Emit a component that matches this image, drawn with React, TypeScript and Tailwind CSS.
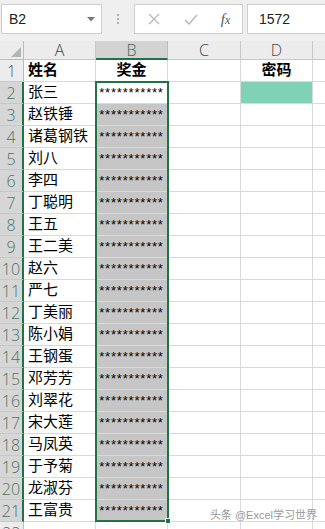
import React from "react";

const names = [
  "张三","赵铁锤","诸葛钢铁","刘八","李四","丁聪明","王五","王二美","赵六","严七",
  "丁美丽","陈小娟","王钢蛋","邓芳芳","刘翠花","宋大莲","马凤英","于予菊","龙淑芬","王富贵",
];

const font = { fontFamily: '"Liberation Sans", "Noto Sans CJK SC", sans-serif' };

function Row({ n, a, b, bold, d, dFill }: { n: number; a?: string; b?: string; bold?: boolean; d?: string; dFill?: boolean }) {
  const sel = n >= 2 && n <= 21;
  return (
    <>
      <div
        className={`h-[22px] flex items-center justify-center text-[16px] border-b border-[#c8c8c8] ${
          sel ? "bg-[#d6d6d6] text-[#4a7560] border-r-2 border-r-[#217346]" : "bg-[#ececec] text-[#555] border-r border-r-[#bdbdbd]"
        }`}
        style={{ fontFamily: '"Open Sans", "Liberation Sans", sans-serif', fontWeight: 300 }}
      >
        {n}
      </div>
      <div className={`h-[22px] flex items-center pl-[4px] text-[15px] text-black border-b border-r border-[#d9d9d9] ${bold ? "font-bold" : ""}`}>
        {a}
      </div>
      <div
        className={`h-[22px] flex items-center justify-center text-black border-b border-r ${
          n >= 3 && n <= 21 ? "bg-[#c6c6c6] border-[#dadada]" : "border-[#d9d9d9]"
        } ${bold ? "font-bold text-[15px]" : "text-[13px] tracking-[0.8px]"}`}
      >
        {b}
      </div>
      <div className="h-[22px] border-b border-r border-[#d9d9d9]" />
      <div
        className={`h-[22px] flex items-center justify-center font-bold text-[15px] text-black border-b border-r border-[#d9d9d9] ${
          dFill ? "bg-[#7fd2b5]" : ""
        }`}
      >
        {d}
      </div>
      <div className="h-[22px] border-b border-[#d9d9d9]" />
    </>
  );
}

const hdr = { fontFamily: '"Open Sans", "Liberation Sans", sans-serif', fontWeight: 300 };

export default function App() {
  return (
    <div className="w-[325px] h-[529px] overflow-hidden bg-white relative" style={font}>
      {/* formula bar */}
      <div className="h-[41px] bg-[#efefef] flex items-start pt-[4px] pl-[1px] gap-0">
        <div className="w-[101px] h-[30px] bg-white border border-[#cfcfcf] flex items-center pl-[7px] pr-[6px] text-[14px] text-[#222]">
          <span className="flex-1">B2</span>
          <svg width="8" height="5" viewBox="0 0 8 5"><path d="M0 0 L8 0 L4 4.5 Z" fill="#7a7a7a" /></svg>
        </div>
        <div className="w-[32px] h-[30px] flex flex-col items-center justify-center gap-[2px]">
          <span className="w-[2px] h-[2px] bg-[#b0b0b0]" />
          <span className="w-[2px] h-[2px] bg-[#b0b0b0]" />
          <span className="w-[2px] h-[2px] bg-[#b0b0b0]" />
        </div>
        <div className="w-[109px] h-[30px] bg-white border border-[#cfcfcf] flex items-center">
          <div className="w-[37px] flex justify-center">
            <svg width="12" height="12" viewBox="0 0 12 12"><path d="M1 1 L11 11 M11 1 L1 11" stroke="#b8b8b8" strokeWidth="1.3" /></svg>
          </div>
          <div className="w-[37px] flex justify-center">
            <svg width="14" height="11" viewBox="0 0 14 11"><path d="M1 6 L5 10 L13 1" stroke="#b8b8b8" strokeWidth="1.5" fill="none" /></svg>
          </div>
          <div className="w-[33px] flex justify-center items-baseline text-[15px] italic text-[#555]" style={{ fontFamily: '"Liberation Serif", serif' }}>
            f<span className="text-[12px]">x</span>
          </div>
        </div>
        <div className="ml-[4px] flex-1 h-[30px] bg-white border border-[#cfcfcf] border-r-0 flex items-center pl-[11px] text-[14px] text-[#222]">
          1572
        </div>
      </div>

      {/* sheet */}
      <div className="grid grid-cols-[24px_72px_72px_73px_72px_1fr]">
        {/* header */}
        <div className="h-[19px] bg-[#ececec] border-b border-r border-[#bdbdbd] relative">
          <svg className="absolute right-[2px] bottom-[2px]" width="10" height="10" viewBox="0 0 10 10"><path d="M10 0 L10 10 L0 10 Z" fill="#b4b4b4" /></svg>
        </div>
        <div className="h-[19px] bg-[#ececec] border-b border-r border-[#c8c8c8] flex items-center justify-center text-[16px] text-[#444]" style={hdr}>A</div>
        <div className="h-[19px] bg-[#d3d3d3] border-b-2 border-b-[#217346] border-r border-r-[#bdbdbd] flex items-center justify-center text-[16px] text-[#3c6e52]" style={hdr}>B</div>
        <div className="h-[19px] bg-[#ececec] border-b border-r border-[#c8c8c8] flex items-center justify-center text-[16px] text-[#444]" style={hdr}>C</div>
        <div className="h-[19px] bg-[#ececec] border-b border-r border-[#c8c8c8] flex items-center justify-center text-[16px] text-[#444]" style={hdr}>D</div>
        <div className="h-[19px] bg-[#ececec] border-b border-[#c8c8c8]" />

        <Row n={1} a="姓名" b="奖金" bold d="密码" />
        {names.map((nm, i) => (
          <Row key={i} n={i + 2} a={nm} b="***********" dFill={i === 0} />
        ))}
        <Row n={22} />
      </div>

      {/* selection border over B2:B21 */}
      <div className="absolute left-[95px] top-[81px] w-[74px] h-[441px] border-2 border-[#217346] pointer-events-none" />
      <div className="absolute left-[165px] top-[518px] w-[6px] h-[6px] bg-[#217346] border border-white pointer-events-none" />

      {/* watermark */}
      <div className="absolute right-[8px] bottom-[6px] text-[11px] text-[#999]" style={{ textShadow: "0 0 2px #fff" }}>
        头条 @Excel学习世界
      </div>
    </div>
  );
}
